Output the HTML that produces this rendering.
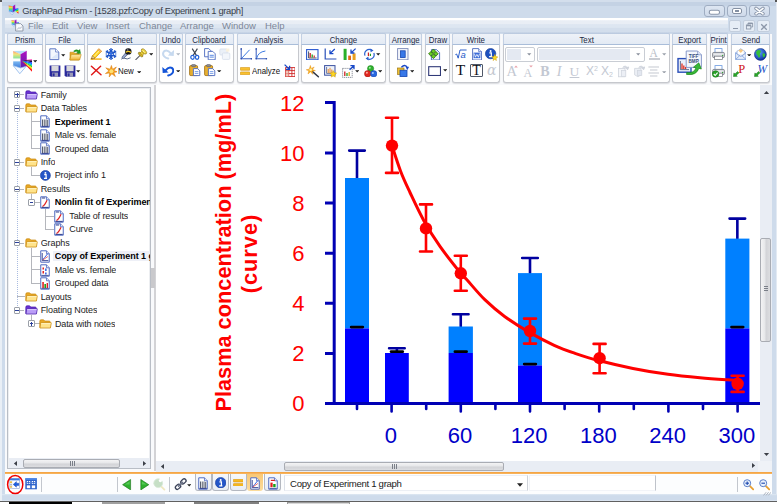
<!DOCTYPE html><html><head><meta charset="utf-8"><title>GraphPad Prism</title><style>
*{box-sizing:border-box}
html,body{margin:0;padding:0}
body{width:777px;height:504px;position:relative;overflow:hidden;background:#cedbeb;font:9px "Liberation Sans",sans-serif;color:#222}
.a{position:absolute}
.t{position:absolute;white-space:nowrap;line-height:10px}
.grp{position:absolute;top:33px;height:50px;border:1px solid #c6c8cd;border-top-color:#bccbe0;border-radius:2px 2px 3px 3px;background:#fff;box-shadow:0 1px 1px #dcdde0}
.grp .h{position:absolute;left:-1px;right:-1px;top:-1px;height:12px;background:linear-gradient(#eef2f8,#e3eaf4);border:1px solid #c3d0e3;border-top-color:#bccbe0;border-bottom-color:#a9bdd9;border-radius:2px 2px 0 0;text-align:center;line-height:11.6px;font-size:9.4px;color:#1e2a44;white-space:nowrap;overflow:visible}
.grp .h span{display:inline-block;transform:scaleX(0.84);transform-origin:50% 50%;margin:0 -10px}
.nar{display:inline-block;transform:scaleX(0.84);transform-origin:0 50%}
.mn{position:absolute;top:21px;color:#7d8798;font-size:9.5px;white-space:nowrap;line-height:10px}
.tri{position:absolute;width:0;height:0;border-left:2px solid transparent;border-right:2px solid transparent;border-top:2px solid #222}
</style></head><body>
<div class="a" style="left:0;top:0;width:777px;height:6.2px;background:linear-gradient(#d3deec 0,#d3deec 30%,#c4d2e4 38%,#c4d2e4 92%,#cedbeb 100%)"></div>
<div class="a" style="left:0;top:0;width:2px;height:504px;background:#e9eff6"></div>
<div class="a" style="left:0;top:0;width:2px;height:2px;background:#555"></div>
<div class="a" style="left:775px;top:0;width:2px;height:2px;background:#555"></div>
<div class="t" style="left:22.2px;top:6.2px;font-size:9.4px;color:#3a3f4a;letter-spacing:-0.32px">GraphPad Prism - [1528.pzf:Copy of Experiment 1 graph]</div>
<div class="a" style="left:776px;top:2px;width:1px;height:499px;background:#e3eaf3"></div>
<div class="a" style="left:703.5px;top:5px;width:21.0px;height:11.5px;border:1px solid #9fadc2;border-radius:3px;background:linear-gradient(#dde6f2,#cfdaea)"></div>
<div class="a" style="left:726.5px;top:5px;width:20.0px;height:11.5px;border:1px solid #9fadc2;border-radius:3px;background:linear-gradient(#dde6f2,#cfdaea)"></div>
<div class="a" style="left:749px;top:5px;width:20.5px;height:11.5px;border:1px solid #9fadc2;border-radius:3px;background:linear-gradient(#dde6f2,#cfdaea)"></div>
<svg class="a" style="left:708px;top:8px" width="13" height="8" viewBox="0 0 13 8"><rect x="1.3" y="2.2" width="10.2" height="4" rx="1.8" fill="#fff" stroke="#8a96aa" stroke-width="1.1"/></svg>
<div class="a" style="left:732px;top:7.5px;width:9.5px;height:6.5px;border:1.3px solid #8490a3;border-radius:2px;background:#fff"></div><div class="a" style="left:735px;top:10px;width:3.5px;height:1.6px;background:#8490a3"></div>
<svg class="a" style="left:753px;top:6px" width="13" height="10" viewBox="0 0 13 10"><path d="M3 2.4L10 7.8M10 2.4L3 7.8" stroke="#8a96aa" stroke-width="3.4" stroke-linecap="round"/><path d="M3 2.4L10 7.8M10 2.4L3 7.8" stroke="#fff" stroke-width="1.6" stroke-linecap="round"/></svg>
<div class="a" style="left:5px;top:18px;width:767.4px;height:477px;background:#f9fafc"></div>
<div class="a" style="left:5px;top:18px;width:767.4px;height:16px;background:#cedbeb"></div>
<div class="a" style="left:5px;top:18px;width:723px;height:15.2px;background:linear-gradient(#ffffff 0,#ffffff 12%,#e9eef5 18%,#e9eef5 38%,#dde6f1 44%,#dde6f1 62%,#d3deec 70%,#d3deec 92%,#bfcee2 100%)"></div>
<div class="mn" style="left:28px">File</div>
<div class="mn" style="left:52px">Edit</div>
<div class="mn" style="left:77px">View</div>
<div class="mn" style="left:106px">Insert</div>
<div class="mn" style="left:139px">Change</div>
<div class="mn" style="left:180px">Arrange</div>
<div class="mn" style="left:222px">Window</div>
<div class="mn" style="left:265px">Help</div>
<div class="a" style="left:728.5px;top:20px;width:12.8px;height:12.3px;border:1px solid #c3cedd;border-radius:2px;background:#e6edf6"></div>
<div class="a" style="left:743.3px;top:20px;width:12.2px;height:12.3px;border:1px solid #c3cedd;border-radius:2px;background:#e6edf6"></div>
<div class="a" style="left:757px;top:20px;width:12.7px;height:12.3px;border:1px solid #c3cedd;border-radius:2px;background:#e6edf6"></div>
<div class="a" style="left:732.5px;top:28px;width:5px;height:1.4px;background:#8c97a9"></div>
<svg class="a" style="left:745px;top:22px" width="9" height="9" viewBox="0 0 9 9" fill="none" stroke="#8c97a9" stroke-width="0.9"><path d="M3 2.8V1H7.6V5H6"/><rect x="1.4" y="3" width="4.4" height="4"/><path d="M1.4 3.6H5.8M3 1.5H7.6" stroke-width="1.2"/></svg>
<svg class="a" style="left:759.5px;top:22.5px" width="8" height="8" viewBox="0 0 8 8"><path d="M1.2 1.2L6.8 6.8M6.8 1.2L1.2 6.8" stroke="#8c97a9" stroke-width="1.3"/></svg>
<div class="grp" style="left:7px;width:36px"><div class="h"><span>Prism</span></div></div>
<div class="grp" style="left:45px;width:40px"><div class="h"><span>File</span></div></div>
<div class="grp" style="left:87px;width:70px"><div class="h"><span>Sheet</span></div></div>
<div class="grp" style="left:159px;width:24px"><div class="h"><span>Undo</span></div></div>
<div class="grp" style="left:185px;width:49px"><div class="h"><span>Clipboard</span></div></div>
<div class="grp" style="left:237px;width:62px"><div class="h"><span>Analysis</span></div></div>
<div class="grp" style="left:301px;width:85px"><div class="h"><span>Change</span></div></div>
<div class="grp" style="left:389px;width:33px"><div class="h"><span>Arrange</span></div></div>
<div class="grp" style="left:425px;width:25px"><div class="h"><span>Draw</span></div></div>
<div class="grp" style="left:452px;width:48px"><div class="h"><span>Write</span></div></div>
<div class="grp" style="left:503px;width:167px"><div class="h"><span>Text</span></div></div>
<div class="grp" style="left:672px;width:35px"><div class="h"><span>Export</span></div></div>
<div class="grp" style="left:710px;width:18px"><div class="h"><span>Print</span></div></div>
<div class="grp" style="left:731px;width:39px"><div class="h"><span>Send</span></div></div>
<svg class="a" width="0" height="0" style="left:0;top:0"><defs><linearGradient id="gRain" x1="0" y1="0" x2="0" y2="1"><stop offset="0" stop-color="#ff5040"/><stop offset="0.25" stop-color="#ffe040"/><stop offset="0.5" stop-color="#60e060"/><stop offset="0.75" stop-color="#40b0ff"/><stop offset="1" stop-color="#5070e0"/></linearGradient><linearGradient id="gPurp" x1="0" y1="0" x2="0" y2="1"><stop offset="0" stop-color="#b010c0"/><stop offset="1" stop-color="#6020b0"/></linearGradient><linearGradient id="gBeam" x1="0" y1="0" x2="0.45" y2="1"><stop offset="0" stop-color="#200020"/><stop offset="0.18" stop-color="#b000d0"/><stop offset="0.36" stop-color="#2040ff"/><stop offset="0.5" stop-color="#00c8e0"/><stop offset="0.64" stop-color="#30d030"/><stop offset="0.8" stop-color="#ffe020"/><stop offset="1" stop-color="#ff1010"/></linearGradient><radialGradient id="gGlobe" cx="0.4" cy="0.35" r="0.7"><stop offset="0" stop-color="#5aa0ff"/><stop offset="1" stop-color="#0a2a9a"/></radialGradient><linearGradient id="gFold" x1="0" y1="0" x2="0" y2="1"><stop offset="0" stop-color="#fff0b0"/><stop offset="1" stop-color="#f0b030"/></linearGradient></defs></svg>
<svg class="a" width="0" height="0" style="left:0;top:0"><defs><linearGradient id="gFace" x1="0" y1="0" x2="0" y2="1"><stop offset="0" stop-color="#f89878"/><stop offset="0.18" stop-color="#f6e27a"/><stop offset="0.38" stop-color="#98e498"/><stop offset="0.5" stop-color="#fdfefe"/><stop offset="0.58" stop-color="#fdfefe"/><stop offset="0.64" stop-color="#78b4f0"/><stop offset="1" stop-color="#3c7cdc"/></linearGradient></defs></svg>
<svg class="a" style="left:12px;top:49.5px" width="21" height="24.5" viewBox="0 0 21 24.5" ><path d="M1.2 1.1L14.75 0.7L8.5 4.2Z" fill="#b4dcf8"/><path d="M1.2 1.1L8.5 4.2V17.9L1.2 15.6Z" fill="url(#gFace)"/><path d="M8.5 4.2L14.75 0.7V16.2L8.5 17.9Z" fill="url(#gPurp)"/><path d="M1.2 15.6L8.5 17.9L14.2 16.3L7.8 23.7Z" fill="#f6faff" stroke="#7aaae8" stroke-width="0.7"/><path d="M9.8 10.20L20 9.3V10.75Z" fill="#ff38b0"/><path d="M9.8 10.32L20 10.6V12.35Z" fill="#180838"/><path d="M9.8 10.44L20 12.2V14.15Z" fill="#2848ff"/><path d="M9.8 10.56L20 14.0V15.950000000000001Z" fill="#00c0e8"/><path d="M9.8 10.68L20 15.8V17.75Z" fill="#30d030"/><path d="M9.8 10.80L20 17.6V19.65Z" fill="#ffe820"/><path d="M9.8 10.92L20 19.5V21.75Z" fill="#ff1010"/></svg>
<svg class="a" style="left:32.8px;top:60.4px" width="4.4" height="2.8" viewBox="0 0 4.4 2.8" ><path d="M0.1 0.2H4.3L2.2 2.6Z" fill="#1a1a1a"/></svg>
<svg class="a" style="left:49px;top:48px" width="11" height="12.5" viewBox="0 0 11 12.5" ><path d="M0.8 0.8H6.6L9.8 4V11.6H0.8Z" fill="#f2f6fd" stroke="#5f78c4" stroke-width="1"/><path d="M6.6 0.8V4H9.8" fill="#fff" stroke="#5f78c4" stroke-width="0.8"/><path d="M2 10.5L8.8 5V10.5Z" fill="#dbe6f8"/></svg>
<svg class="a" style="left:61.4px;top:53.9px" width="4.4" height="2.8" viewBox="0 0 4.4 2.8" ><path d="M0.1 0.2H4.3L2.2 2.6Z" fill="#1a1a1a"/></svg>
<svg class="a" style="left:69px;top:47.6px" width="13" height="13" viewBox="0 0 13 13" ><path d="M1 4.2H4.5L5.5 5.3H10V12H1Z" fill="#e9a825" stroke="#c08a10" stroke-width="0.6"/><path d="M0.8 12L2.2 6.6H12.2L10.6 12Z" fill="url(#gFold)" stroke="#c08a10" stroke-width="0.6"/><path d="M4.6 3.2Q7.2 0.6 9.8 2.6L10.8 1.4L11.6 5.6L7.6 5.2L8.8 3.9Q7 2.6 5.6 4Z" fill="#22a022" stroke="#0a700a" stroke-width="0.4"/></svg>
<svg class="a" style="left:48.6px;top:64.5px" width="12" height="12.4" viewBox="0 0 12 12.4" ><path d="M0.6 0.6H11.4V11.8H1.8L0.6 10.6Z" fill="#2a2a9c"/><rect x="2.4" y="0.6" width="7.2" height="5.6" fill="#d8d8dc"/><rect x="3" y="7.6" width="6" height="4.2" fill="#9a9ab8"/><rect x="3.6" y="8.4" width="2" height="2.8" fill="#2a2a9c"/></svg>
<svg class="a" style="left:63.6px;top:64.5px" width="12" height="12.4" viewBox="0 0 12 12.4" ><path d="M0.6 0.6H11.4V11.8H1.8L0.6 10.6Z" fill="#2a2a9c"/><rect x="2.4" y="0.6" width="7.2" height="5.6" fill="#d8d8dc"/><rect x="3" y="7.6" width="6" height="4.2" fill="#9a9ab8"/><rect x="3.6" y="8.4" width="2" height="2.8" fill="#2a2a9c"/></svg>
<svg class="a" style="left:76.3px;top:70.0px" width="4.4" height="2.8" viewBox="0 0 4.4 2.8" ><path d="M0.1 0.2H4.3L2.2 2.6Z" fill="#1a1a1a"/></svg>
<svg class="a" style="left:89.6px;top:48px" width="12.4" height="12.4" viewBox="0 0 12.4 12.4" ><path d="M0.6 11.1H11.6" stroke="#f6b31c" stroke-width="1.5"/><path d="M2.4 7.8L8.8 0.8L11.6 3.2L5 10.2L1.6 11Z" fill="#ffd722" stroke="#d8900c" stroke-width="0.7"/><path d="M4 8.6L9.8 2.2" stroke="#fff0a0" stroke-width="1"/><path d="M2.4 7.8L5 10.2L1.6 11Z" fill="#f0d8a8" stroke="#8a5a10" stroke-width="0.5"/><path d="M1.6 11L2.6 10.7L1.9 10Z" fill="#302010"/><path d="M8.8 0.8L11.6 3.2L10.7 4.2L7.9 1.8Z" fill="#f4b0a0" stroke="#d8900c" stroke-width="0.4"/></svg>
<svg class="a" style="left:105px;top:48.4px" width="12" height="12" viewBox="0 0 12 12" ><g stroke="#1c54c8" stroke-width="1.3" fill="none" stroke-linecap="round"><path d="M6 0.6V11.4M1.3 3.3L10.7 8.7M1.3 8.7L10.7 3.3"/><path d="M4.5 1.5L6 2.9L7.5 1.5M4.5 10.5L6 9.1L7.5 10.5M1.1 5.1L2.9 4.4L2.6 2.5M10.9 6.9L9.1 7.6L9.4 9.5M1.1 6.9L2.9 7.6L2.6 9.5M10.9 5.1L9.1 4.4L9.4 2.5" stroke-width="1.05"/><circle cx="6" cy="6" r="2.4" stroke-width="1.05"/></g><circle cx="6" cy="6" r="0.9" fill="#3a78f0"/></svg>
<svg class="a" style="left:120px;top:48px" width="12.4" height="12.4" viewBox="0 0 12.4 12.4" ><path d="M1.2 11.2Q3.4 9 5 10.4T10.6 9.8" stroke="#4a5a80" stroke-width="0.9" fill="none"/><path d="M1.8 9.4L5.8 4.6L7.8 6.4L3.4 10.6Z" fill="#93a3cc" stroke="#3a4868" stroke-width="0.6"/><circle cx="8.3" cy="3.4" r="3.2" fill="#16161c"/><path d="M5.8 4.2Q8.4 2.4 11 4.4" stroke="#f2c81e" stroke-width="1.3" fill="none"/><circle cx="7.6" cy="2" r="0.9" fill="#70707c"/></svg>
<svg class="a" style="left:135.4px;top:48px" width="12.6" height="12.4" viewBox="0 0 12.6 12.4" ><path d="M0.8 11.6L5.6 6.8" stroke="#5a5a64" stroke-width="1.1" stroke-linecap="round"/><ellipse cx="0" cy="0" rx="2.9" ry="1.3" transform="translate(5.6 6.6) rotate(45)" fill="#d8b828" stroke="#7a6410" stroke-width="0.6"/><path d="M4.9 5.1L7 3L9.4 5.4L7.2 7.4Z" fill="#e8cc38" stroke="#8a7010" stroke-width="0.5"/><ellipse cx="0" cy="0" rx="3.3" ry="1.7" transform="translate(9 3.4) rotate(45)" fill="#f0d848" stroke="#8a7010" stroke-width="0.6"/><path d="M7.6 2.6L9.6 4.6" stroke="#fff6b0" stroke-width="0.8"/></svg>
<svg class="a" style="left:149.1px;top:52.8px" width="4.4" height="2.8" viewBox="0 0 4.4 2.8" ><path d="M0.1 0.2H4.3L2.2 2.6Z" fill="#1a1a1a"/></svg>
<svg class="a" style="left:89.6px;top:65px" width="12.4" height="11" viewBox="0 0 12.4 11" ><path d="M1.4 1.2L11 9.8M10.6 1.2L1.6 9.8" stroke="#e01818" stroke-width="1.45" stroke-linecap="round"/></svg>
<svg class="a" style="left:104.6px;top:64.6px" width="12.8" height="12.4" viewBox="0 0 12.8 12.4" ><path d="M6.4 0.4L7.6 4.2L11.4 2L9 5.6L12.6 6.8L8.8 7.6L10.4 11.6L6.8 8.8L4.2 12L4.6 8L0.4 8.6L3.8 6L0.8 2.8L5 4.2Z" fill="#f5a020" stroke="#d87808" stroke-width="0.5"/><circle cx="6.4" cy="6.3" r="2" fill="#ffe070"/></svg>
<div class="t" style="left:118.3px;top:66px;font-size:9.4px;color:#111"><span class="nar">New</span></div>
<svg class="a" style="left:136.7px;top:70.6px" width="4.4" height="2.8" viewBox="0 0 4.4 2.8" ><path d="M0.1 0.2H4.3L2.2 2.6Z" fill="#1a1a1a"/></svg>
<svg class="a" style="left:161.5px;top:48.8px" width="12.4" height="10.8" viewBox="0 0 12.4 10.8" ><g transform="translate(12.4 0) scale(-1 1)"><path d="M3.4 4.6Q6.6 0.2 10 2Q12.6 4.4 10.2 7.4Q8.8 9 6.2 9.6" stroke="#c6d9ef" stroke-width="2" fill="none" stroke-linecap="round"/><path d="M0.3 0.9L0.7 7L6.6 6.4Z" fill="#c6d9ef"/></g></svg>
<svg class="a" style="left:176.1px;top:52.9px" width="4.4" height="2.8" viewBox="0 0 4.4 2.8" ><path d="M0.1 0.2H4.3L2.2 2.6Z" fill="#b0b8c4"/></svg>
<svg class="a" style="left:161.7px;top:65.8px" width="12.4" height="10.8" viewBox="0 0 12.4 10.8" ><g><path d="M3.4 4.6Q6.6 0.2 10 2Q12.6 4.4 10.2 7.4Q8.8 9 6.2 9.6" stroke="#1454d8" stroke-width="2" fill="none" stroke-linecap="round"/><path d="M0.3 0.9L0.7 7L6.6 6.4Z" fill="#1454d8"/></g></svg>
<svg class="a" style="left:176.1px;top:69.5px" width="4.4" height="2.8" viewBox="0 0 4.4 2.8" ><path d="M0.1 0.2H4.3L2.2 2.6Z" fill="#1a1a1a"/></svg>
<svg class="a" style="left:190.2px;top:48px" width="9.6" height="11.8" viewBox="0 0 9.6 11.8" ><path d="M2.2 0.6L6.4 7.4M7.4 0.6L3.2 7.4" stroke="#38404e" stroke-width="1.1"/><ellipse cx="2.5" cy="9.3" rx="1.7" ry="2" fill="none" stroke="#2060d8" stroke-width="1.2"/><ellipse cx="7.1" cy="9.3" rx="1.7" ry="2" fill="none" stroke="#2060d8" stroke-width="1.2"/></svg>
<svg class="a" style="left:204.2px;top:48px" width="12" height="12.4" viewBox="0 0 12 12.4" ><path d="M0.6 0.6H4.76L7.0 2.84V8.799999999999999H0.6Z" fill="#fff" stroke="#4a68c0" stroke-width="0.9"/><path d="M4.2 3.4H8.799999999999999L11.2 5.8V11.8H4.2Z" fill="#fff" stroke="#4a68c0" stroke-width="0.9"/><path d="M5.6 7.4H9.8M5.6 9.2H9.8" stroke="#7aa0e8" stroke-width="1.2"/></svg>
<svg class="a" style="left:219px;top:48px" width="11.6" height="12.4" viewBox="0 0 11.6 12.4" ><g opacity="0.35"><rect x="0.8" y="1" width="7.4" height="6" rx="1" fill="#c8d6ea" stroke="#8aa0c8" stroke-width="0.8"/><rect x="3.4" y="5" width="7.4" height="6.4" rx="1" fill="#dfe8f4" stroke="#8aa0c8" stroke-width="0.8"/><rect x="7" y="0.6" width="3.4" height="3" fill="#f0d8a0"/></g></svg>
<svg class="a" style="left:189.2px;top:64.4px" width="11.6" height="12.4" viewBox="0 0 11.6 12.4" ><rect x="0.6" y="1.6" width="8" height="10" rx="1.2" fill="#e8b030" stroke="#9a6a10" stroke-width="0.8"/><rect x="2.6" y="0.5" width="4" height="2.2" rx="0.8" fill="#8a8a92" stroke="#50505a" stroke-width="0.5"/><path d="M4.4 4.6H8.56L10.8 6.84V11.6H4.4Z" fill="#fff" stroke="#4a68c0" stroke-width="0.9"/><path d="M5.8 7.6H9.4M5.8 9.4H9.4" stroke="#7aa0e8" stroke-width="1"/></svg>
<svg class="a" style="left:204.4px;top:64.4px" width="11.6" height="12.4" viewBox="0 0 11.6 12.4" ><rect x="0.6" y="1.6" width="8" height="10" rx="1.2" fill="#e8b030" stroke="#9a6a10" stroke-width="0.8"/><rect x="2.6" y="0.5" width="4" height="2.2" rx="0.8" fill="#8a8a92" stroke="#50505a" stroke-width="0.5"/><path d="M4.4 4.6H8.56L10.8 6.84V11.6H4.4Z" fill="#fff" stroke="#4a68c0" stroke-width="0.9"/><path d="M5.8 7.6H9.4M5.8 9.4H9.4" stroke="#7aa0e8" stroke-width="1"/></svg>
<svg class="a" style="left:217.2px;top:69.6px" width="4.4" height="2.8" viewBox="0 0 4.4 2.8" ><path d="M0.1 0.2H4.3L2.2 2.6Z" fill="#1a1a1a"/></svg>
<svg class="a" style="left:239.8px;top:48px" width="12.4" height="12" viewBox="0 0 12.4 12" ><path d="M1.2 0.8V10.8H11.6" stroke="#3e62c0" stroke-width="1.05" fill="none"/><path d="M1.6 10.4L9.6 1.8" stroke="#3a78e0" stroke-width="1"/><circle cx="1.2" cy="0.9" r="0.8" fill="#2a4aa8"/><circle cx="11.4" cy="10.8" r="0.8" fill="#2a4aa8"/><circle cx="1.2" cy="10.8" r="0.8" fill="#2a4aa8"/></svg>
<svg class="a" style="left:255.4px;top:48px" width="12.4" height="12" viewBox="0 0 12.4 12" ><path d="M1.2 0.8V10.8H11.6" stroke="#3e62c0" stroke-width="1.05" fill="none"/><path d="M1.6 10.4Q3 4 10.4 3" stroke="#3a78e0" stroke-width="1" fill="none"/><circle cx="1.2" cy="0.9" r="0.8" fill="#2a4aa8"/><circle cx="11.4" cy="10.8" r="0.8" fill="#2a4aa8"/><circle cx="1.2" cy="10.8" r="0.8" fill="#2a4aa8"/></svg>
<svg class="a" style="left:239.8px;top:66.8px" width="10.4" height="8.4" viewBox="0 0 10.4 8.4" ><rect x="0.3" y="0.4" width="9.6" height="2.9" rx="0.6" fill="#f8c030" stroke="#d09010" stroke-width="0.6"/><rect x="0.3" y="4.9" width="9.6" height="2.9" rx="0.6" fill="#f8c030" stroke="#d09010" stroke-width="0.6"/></svg>
<div class="t" style="left:252px;top:66px;font-size:9.4px;color:#111"><span class="nar">Analyze</span></div>
<svg class="a" style="left:283.8px;top:64.4px" width="11.6" height="13" viewBox="0 0 11.6 13" ><rect x="1.6" y="3.6" width="9.4" height="9" fill="#fff" stroke="#d02828" stroke-width="0.9"/><path d="M1.6 6.6H11M1.6 9.6H11M4.7 3.6V12.6M7.9 3.6V12.6" stroke="#d02828" stroke-width="0.9"/><rect x="1.6" y="6.6" width="3.1" height="6" fill="#e8b0a0" opacity="0.7"/><path d="M0.6 0.6L5.4 5.2M5.6 1.8V5.4H2" stroke="#1848c8" stroke-width="1.3" fill="none"/></svg>
<svg class="a" style="left:306.4px;top:48.6px" width="12.6" height="11.6" viewBox="0 0 12.6 11.6" ><rect x="0.6" y="0.6" width="11.4" height="10.2" fill="#fff" stroke="#2a58d0" stroke-width="1.1"/><path d="M2.6 2.4V9H10.6" stroke="#202840" stroke-width="0.8" fill="none"/><path d="M4.2 4V8.6" stroke="#d02020" stroke-width="1.3"/><path d="M6.2 5.4V8.6" stroke="#20a020" stroke-width="1.3"/><path d="M8.2 6.6V8.6" stroke="#d02020" stroke-width="1.2"/></svg>
<svg class="a" style="left:324px;top:48px" width="13" height="12.4" viewBox="0 0 13 12.4" ><path d="M1.2 0.6V11H12.4" stroke="#2a50b8" stroke-width="1.2" fill="none"/><path d="M10.8 1L6.2 5.4M6 2.2V5.6H9.4" stroke="#1848c8" stroke-width="1.3" fill="none"/></svg>
<svg class="a" style="left:343px;top:47.8px" width="13.6" height="12.6" viewBox="0 0 13.6 12.6" ><rect x="0.6" y="0.8" width="3" height="11.4" fill="#28b028"/><rect x="5.2" y="7.6" width="2.8" height="4.6" fill="#e06818"/><rect x="9.6" y="5.4" width="3" height="6.8" fill="#e8a020"/><path d="M12.6 0.6L8.4 4.6M8 1.6V5H11.4" stroke="#1848c8" stroke-width="1.3" fill="none"/></svg>
<svg class="a" style="left:363px;top:48px" width="12.8" height="12.6" viewBox="0 0 12.8 12.6" ><path d="M2 7.6A4.6 4.6 0 0 1 8.6 2" stroke="#2a60d0" stroke-width="1.2" fill="none"/><path d="M10.8 5A4.6 4.6 0 0 1 4.4 10.8" stroke="#2a60d0" stroke-width="1.2" fill="none"/><path d="M7.4 0.4L10.6 2.4L7.6 4.2Z M5.6 12.4L2.6 10.6L5.4 8.6Z" fill="#2a60d0"/><path d="M5.4 4.6V8" stroke="#d02020" stroke-width="1.2"/><path d="M7.4 5.8V8" stroke="#20a020" stroke-width="1.2"/></svg>
<svg class="a" style="left:376.4px;top:53.2px" width="4.4" height="2.8" viewBox="0 0 4.4 2.8" ><path d="M0.1 0.2H4.3L2.2 2.6Z" fill="#1a1a1a"/></svg>
<svg class="a" style="left:306.4px;top:65px" width="13.2" height="12.6" viewBox="0 0 13.2 12.6" ><path d="M5.4 5.6L12.4 11.8" stroke="#303848" stroke-width="1.5" stroke-linecap="round"/><path d="M4.4 0.4L5.2 3.4L8.2 2L6.4 4.6L9.4 5.6L6.2 6.2L6.8 9.4L4.6 6.8L2 9L2.8 5.8L0.2 4.8L3.2 4.2Z" fill="#f8b020" stroke="#e08808" stroke-width="0.4"/><circle cx="4.7" cy="4.8" r="1.3" fill="#fff4b0"/></svg>
<svg class="a" style="left:324px;top:65px" width="13" height="12.8" viewBox="0 0 13 12.8" ><rect x="0.6" y="0.6" width="10.4" height="9.6" fill="#eef2fa" stroke="#3a50a0" stroke-width="1"/><path d="M2.6 2V8.4H9" stroke="#3a4a80" stroke-width="0.7" fill="none"/><path d="M4.2 4V8M6 2.8V8M7.8 4.6V8" stroke="#e89040" stroke-width="1.1"/><path d="M9.2 5.6L10.2 7.8L12.6 8.1L10.8 9.7L11.3 12.1L9.2 10.9L7.1 12.1L7.6 9.7L5.8 8.1L8.2 7.8Z" fill="#ffd820" stroke="#c89808" stroke-width="0.5"/></svg>
<svg class="a" style="left:342px;top:64.8px" width="12.6" height="13" viewBox="0 0 12.6 13" ><rect x="0.6" y="3.4" width="9.6" height="9" fill="#fff" stroke="#505868" stroke-width="0.8" stroke-dasharray="1 1"/><path d="M2.8 6.6V11" stroke="#d02020" stroke-width="1.3"/><path d="M5 8V11" stroke="#20a020" stroke-width="1.3"/><path d="M7.2 7V11" stroke="#e8a020" stroke-width="1.3"/><path d="M7.6 4.8L11.6 1M8.4 0.7H12V4.2" stroke="#1848c8" stroke-width="1.3" fill="none"/></svg>
<svg class="a" style="left:354.6px;top:69.8px" width="4.4" height="2.8" viewBox="0 0 4.4 2.8" ><path d="M0.1 0.2H4.3L2.2 2.6Z" fill="#1a1a1a"/></svg>
<svg class="a" style="left:364px;top:64.8px" width="13.4" height="12.6" viewBox="0 0 13.4 12.6" ><circle cx="6.6" cy="3.6" r="3.1" fill="#30b030" stroke="#108010" stroke-width="0.5"/><circle cx="3.7" cy="8.7" r="3.2" fill="#e02820" stroke="#a01008" stroke-width="0.5"/><circle cx="9.7" cy="8.8" r="3.2" fill="#2868e0" stroke="#1040a8" stroke-width="0.5"/><circle cx="5.8" cy="2.8" r="1" fill="#a0f0a0"/><circle cx="2.9" cy="7.8" r="1" fill="#ffa8a0"/><circle cx="8.9" cy="7.9" r="1" fill="#a8c8ff"/></svg>
<svg class="a" style="left:378.1px;top:69.8px" width="4.4" height="2.8" viewBox="0 0 4.4 2.8" ><path d="M0.1 0.2H4.3L2.2 2.6Z" fill="#1a1a1a"/></svg>
<svg class="a" style="left:397px;top:47.8px" width="11.6" height="12.4" viewBox="0 0 11.6 12.4" ><rect x="0.6" y="0.6" width="10.4" height="11.2" fill="#f4f6fb" stroke="#7a88b8" stroke-width="0.9"/><rect x="3.4" y="2.8" width="4.8" height="6.8" fill="#3878e8" stroke="#1848b0" stroke-width="0.8"/></svg>
<svg class="a" style="left:396.6px;top:64.4px" width="12.8" height="13" viewBox="0 0 12.8 13" ><rect x="0.6" y="4" width="6.4" height="6.4" fill="#f0c030" stroke="#a07810" stroke-width="0.7"/><rect x="3" y="6.2" width="7" height="6.4" fill="#3878e8" stroke="#1848b0" stroke-width="0.8"/><path d="M4.4 3.2Q7.8 -0.4 10.6 3.6" stroke="#1848c8" stroke-width="1.3" fill="none"/><path d="M12.2 2.6L10.4 6L8.6 3.2Z" fill="#1848c8"/></svg>
<svg class="a" style="left:410.0px;top:69.8px" width="4.4" height="2.8" viewBox="0 0 4.4 2.8" ><path d="M0.1 0.2H4.3L2.2 2.6Z" fill="#1a1a1a"/></svg>
<svg class="a" style="left:428.2px;top:47.6px" width="12.6" height="12.6" viewBox="0 0 12.6 12.6" ><path d="M3.4 1.6H8.6L11.6 4.6V12H3.4Z" fill="#eef2fb" stroke="#4a68c0" stroke-width="0.9"/><g fill="#68d020" stroke="#205808" stroke-width="0.7"><path d="M5.4 1L7.6 3.2L5.4 5.4L3.2 3.2Z"/><path d="M2.8 3.6L5 5.8L2.8 8L0.6 5.8Z"/><path d="M8 3.6L10.2 5.8L8 8L5.8 5.8Z"/><path d="M5.4 6.2L7.6 8.4L5.4 10.6L3.2 8.4Z"/></g></svg>
<svg class="a" style="left:427.8px;top:65.6px" width="13.2" height="10.2" viewBox="0 0 13.2 10.2" ><rect x="0.7" y="0.7" width="11.8" height="8.8" fill="#fff" stroke="#303a78" stroke-width="1.1"/></svg>
<svg class="a" style="left:442.6px;top:69.4px" width="4.4" height="2.8" viewBox="0 0 4.4 2.8" ><path d="M0.1 0.2H4.3L2.2 2.6Z" fill="#1a1a1a"/></svg>
<svg class="a" style="left:455.4px;top:48.6px" width="12.4" height="11" viewBox="0 0 12.4 11" ><path d="M0.4 5.6L1.6 5L3.2 9.2L5 1H11.6" stroke="#2458c8" stroke-width="0.95" fill="none"/><text x="5.6" y="9.4" font-family="Liberation Sans, sans-serif" font-style="italic" font-size="9.5" fill="#2458c8">a</text></svg>
<svg class="a" style="left:471.8px;top:47.8px" width="10.4" height="12.6" viewBox="0 0 10.4 12.6" ><path d="M0.6 0.6H6.6L9.6 3.6V12H0.6Z" fill="#fff" stroke="#4a68c0" stroke-width="0.9"/><path d="M6.6 0.6V3.6H9.6" fill="#dfe6f6" stroke="#4a68c0" stroke-width="0.7"/><rect x="1.6" y="4.6" width="6.8" height="5.6" fill="#3c6cd8"/><path d="M2.4 5.6L3.4 9.2L4.9 6.4L6.4 9.2L7.6 5.6" stroke="#fff" stroke-width="0.8" fill="none"/></svg>
<svg class="a" style="left:485.2px;top:47.6px" width="13" height="13" viewBox="0 0 13 13" ><circle cx="5.6" cy="5.6" r="5.2" fill="#1c50c0" stroke="#103890" stroke-width="0.6"/><circle cx="5.6" cy="2.9" r="1" fill="#fff"/><path d="M4.3 4.8H6.3V8.4M4.1 8.6H7.3" stroke="#fff" stroke-width="1.25" fill="none"/><path d="M9.8 6.4L10.7 8.5L12.8 9L11 10.3L11.4 12.6L9.8 11.3L8 12.5L8.6 10.3L6.8 8.9L9 8.5Z" fill="#ffe020" stroke="#c89808" stroke-width="0.5"/></svg>
<div class="t" style="left:455.8px;top:62.4px;font:15.5px/16px 'Liberation Serif',serif;color:#101018">T</div>
<div class="a" style="left:470px;top:64.2px;width:13.2px;height:12.8px;border:1px solid #505868;border-radius:1px;background:#fff"></div>
<div class="t" style="left:472.2px;top:63px;font:14px/16px 'Liberation Serif',serif;color:#101018">T</div>
<div class="t" style="left:487px;top:62px;font:italic 14px/16px 'DejaVu Serif','Liberation Serif',serif;color:#c4c8d0">&#945;</div>
<div class="a" style="left:505px;top:47px;width:30px;height:15px;border:1px solid #c9cdd4;border-radius:2px;background:#fff"></div>
<div class="a" style="left:507px;top:49px;width:13.5px;height:11px;background:#e4e9f2"></div>
<svg class="a" style="left:527.2px;top:53.4px" width="4.4" height="2.8" viewBox="0 0 4.4 2.8" ><path d="M0.1 0.2H4.3L2.2 2.6Z" fill="#8a909c"/></svg>
<div class="a" style="left:537px;top:47px;width:107.5px;height:15px;border:1px solid #c9cdd4;border-radius:2px;background:#fff"></div>
<div class="a" style="left:539.4px;top:49px;width:90.6px;height:11px;background:#e4e9f2"></div>
<svg class="a" style="left:636.4px;top:53.4px" width="4.4" height="2.8" viewBox="0 0 4.4 2.8" ><path d="M0.1 0.2H4.3L2.2 2.6Z" fill="#8a909c"/></svg>
<div class="t" style="left:649.6px;top:47.2px;font:11.5px/12px 'Liberation Serif',serif;color:#b9bec8">A</div>
<div class="a" style="left:648.6px;top:57.6px;width:11px;height:2.4px;background:#c9ccd2"></div>
<svg class="a" style="left:662.2px;top:53.4px" width="4.4" height="2.8" viewBox="0 0 4.4 2.8" ><path d="M0.1 0.2H4.3L2.2 2.6Z" fill="#9aa0aa"/></svg>
<div class="t" style="left:506.6px;top:64.4px;font:14.5px/15px 'Liberation Serif',serif;color:#c3c8d2">A</div>
<svg class="a" style="left:514.4px;top:65px" width="4" height="3" viewBox="0 0 4 3" ><path d="M0.2 2.6L2 0.4L3.8 2.6Z" fill="#e8a0a8"/></svg>
<div class="t" style="left:523.4px;top:66.6px;font:12px/13px 'Liberation Serif',serif;color:#c3c8d2">A</div>
<svg class="a" style="left:529.4px;top:65px" width="4" height="3" viewBox="0 0 4 3" ><path d="M0.2 0.4L2 2.6L3.8 0.4Z" fill="#e8a0a8"/></svg>
<div class="t" style="left:540.2px;top:64.2px;font:bold 14px/15px 'Liberation Serif',serif;color:#c3c8d2">B</div>
<div class="t" style="left:556.8px;top:64.2px;font:italic 14px/15px 'Liberation Serif',serif;color:#c3c8d2">I</div>
<div class="t" style="left:569.6px;top:64.2px;font:13.5px/15px 'Liberation Serif',serif;color:#c3c8d2;text-decoration:underline">U</div>
<div class="t" style="left:586px;top:65.4px;font:12px/13px 'Liberation Sans',sans-serif;color:#c3c8d2">X<span style="font-size:7px;position:relative;top:-4.5px">2</span></div>
<div class="t" style="left:601px;top:65.4px;font:12px/13px 'Liberation Sans',sans-serif;color:#c3c8d2">X<span style="font-size:7px;position:relative;top:2px">2</span></div>
<svg class="a" style="left:618.2px;top:65.4px" width="11.4" height="12.4" viewBox="0 0 11.4 12.4" ><g opacity="0.55"><rect x="0.6" y="3.4" width="6.4" height="8.4" fill="#eef1f6" stroke="#aab2c2" stroke-width="0.8"/><rect x="3.4" y="5.4" width="4.4" height="6.2" fill="#dde3ee" stroke="#aab2c2" stroke-width="0.7"/><path d="M4.6 2.6Q7.4 -0.4 9.6 3M10.8 2L9.6 4.8L7.6 2.8Z" stroke="#aab2c2" stroke-width="1" fill="#aab2c2"/></g></svg>
<svg class="a" style="left:634px;top:65.4px" width="11.4" height="12.4" viewBox="0 0 11.4 12.4" ><g opacity="0.55"><path d="M0.6 3.4H7V9.8L4 11.8L0.6 9.8Z" fill="#dde3ee" stroke="#aab2c2" stroke-width="0.8"/><rect x="3.4" y="5.4" width="4.4" height="5" fill="#cdd5e4" stroke="#aab2c2" stroke-width="0.7"/><path d="M4.6 2.6Q7.4 -0.4 9.6 3M10.8 2L9.6 4.8L7.6 2.8Z" stroke="#aab2c2" stroke-width="1" fill="#aab2c2"/></g></svg>
<svg class="a" style="left:648.4px;top:66.4px" width="11.4" height="11" viewBox="0 0 11.4 11" ><path d="M0.4 1H11M2 4H9.4M0.4 7H11M2 10H9.4" stroke="#c4c8d0" stroke-width="1"/></svg>
<svg class="a" style="left:662.2px;top:70.6px" width="4.4" height="2.8" viewBox="0 0 4.4 2.8" ><path d="M0.1 0.2H4.3L2.2 2.6Z" fill="#9aa0aa"/></svg>
<svg class="a" style="left:676.6px;top:49.6px" width="26" height="25" viewBox="0 0 26 25" ><rect x="1" y="8.6" width="13" height="13.6" fill="#eaf0fb" stroke="#2a4eb8" stroke-width="1.4"/><path d="M3.4 11V19.6H12" stroke="#303a60" stroke-width="0.7" fill="none"/><path d="M5 13.4V19M6.8 15.6V19M8.6 17V19" stroke="#e03020" stroke-width="1.3"/><path d="M9.2 1H20.6L24.4 4.8V17.4H9.2Z" fill="#f4f7fc" stroke="#7c8fc4" stroke-width="0.9"/><path d="M20.6 1V4.8H24.4" fill="#dfe6f6" stroke="#7c8fc4" stroke-width="0.7"/><text x="16.6" y="8.4" font-family="Liberation Sans, sans-serif" font-weight="bold" font-size="4.6" fill="#3a4a78" text-anchor="middle">TIFF</text><text x="16.6" y="13" font-family="Liberation Sans, sans-serif" font-weight="bold" font-size="4.6" fill="#3a4a78" text-anchor="middle">BMP</text><path d="M9.6 22.6Q17.2 23.4 19 17.8L16.4 17.2L21.8 12.8L24.4 19L21.8 18.4Q19.6 25.6 9.6 24.6Z" fill="#38b838" stroke="#0e7a0e" stroke-width="0.6"/></svg>
<svg class="a" style="left:712px;top:48px" width="13" height="13" viewBox="0 0 13 13" ><rect x="3" y="0.6" width="7" height="4.4" fill="#fff" stroke="#6a9ae0" stroke-width="0.8"/><rect x="0.6" y="4.4" width="11.8" height="5.2" rx="1.2" fill="#d4d7dc" stroke="#70747c" stroke-width="0.8"/><rect x="2.6" y="8.2" width="7.8" height="3.2" fill="#fff" stroke="#70747c" stroke-width="0.7"/><path d="M1.6 6.2H11.4" stroke="#f4f5f7" stroke-width="0.9"/><circle cx="10.6" cy="7.4" r="0.6" fill="#30a030"/></svg>
<svg class="a" style="left:712px;top:64.6px" width="13" height="13" viewBox="0 0 13 13" ><rect x="3" y="0.6" width="7" height="4.4" fill="#fff" stroke="#6a9ae0" stroke-width="0.8"/><rect x="0.6" y="4.4" width="11.8" height="5.2" rx="1.2" fill="#d4d7dc" stroke="#70747c" stroke-width="0.8"/><rect x="2.6" y="8.2" width="7.8" height="3.2" fill="#fff" stroke="#70747c" stroke-width="0.7"/><path d="M1.6 6.2H11.4" stroke="#f4f5f7" stroke-width="0.9"/><circle cx="10.6" cy="7.4" r="0.6" fill="#30a030"/><circle cx="3.6" cy="9" r="3.3" fill="#28a028" stroke="#0e700e" stroke-width="0.5"/><path d="M1.8 9L3.2 10.5L5.6 7.6" stroke="#fff" stroke-width="1.1" fill="none"/></svg>
<svg class="a" style="left:734.6px;top:48.2px" width="11.6" height="12" viewBox="0 0 11.6 12" ><path d="M0.6 4.8L5.8 0.8L11 4.8V11.4H0.6Z" fill="#e6eefb" stroke="#7a9ad8" stroke-width="0.8"/><path d="M2.4 2.4H9.2V7H2.4Z" fill="#fff" stroke="#b0bcd8" stroke-width="0.5"/><path d="M3.4 2.6L5.8 1L8.2 2.6L5.8 5Z" fill="#f6c880"/><path d="M0.6 4.8L5.8 8.6L11 4.8M0.6 11.4L4.6 7.8M11 11.4L7 7.8" stroke="#7a9ad8" stroke-width="0.8" fill="none"/></svg>
<svg class="a" style="left:746.8px;top:53.6px" width="4.4" height="2.8" viewBox="0 0 4.4 2.8" ><path d="M0.1 0.2H4.3L2.2 2.6Z" fill="#1a1a1a"/></svg>
<svg class="a" style="left:754.2px;top:47.8px" width="12.8" height="12.8" viewBox="0 0 12.8 12.8" ><circle cx="6.4" cy="6.4" r="6" fill="url(#gGlobe)" stroke="#0a2478" stroke-width="0.5"/><path d="M3 2.4Q5 1.4 6.6 2.4Q7.4 4 6 5.2Q5.4 6.6 6.4 8Q5.6 10 4.4 9.4Q4.2 7.2 2.6 6.4Q1.6 4 3 2.4ZM8.6 5.4Q10.4 4.8 11.4 6.4Q11 8.8 9.4 9.6Q8.2 7.6 8.6 5.4Z" fill="#38c038"/></svg>
<div class="t" style="left:738.2px;top:63px;font:12.5px/13px 'Liberation Serif',serif;color:#d01818">P</div>
<svg class="a" style="left:733.2px;top:70.6px" width="6.4" height="6" viewBox="0 0 6.4 6" ><path d="M0.5 5.5L0.9 1.9L2 2.9L4.6 0.5L5.9 1.9L3.3 4.2L4.3 5.3Z" fill="#2aa82a" stroke="#0e700e" stroke-width="0.5"/></svg>
<div class="t" style="left:757.6px;top:63px;font:italic 11.5px/13px 'Liberation Serif',serif;color:#2050c8">W</div>
<svg class="a" style="left:754.4px;top:70.6px" width="6.4" height="6" viewBox="0 0 6.4 6" ><path d="M0.5 5.5L0.9 1.9L2 2.9L4.6 0.5L5.9 1.9L3.3 4.2L4.3 5.3Z" fill="#2aa82a" stroke="#0e700e" stroke-width="0.5"/></svg>
<div class="a" style="left:7.3px;top:87px;width:143.7px;height:382.3px;background:#fff;border:1.2px solid #b9bec6;box-shadow:inset 0 0 0 1px #eceef1"></div>
<div class="a" style="left:154.3px;top:85px;width:1.5px;height:386px;background:#d3d3d6"></div>
<div class="a" style="left:150.8px;top:268.4px;width:4.1px;height:19.3px;background:#c9c9cc"></div>
<div class="a" style="left:156px;top:85px;width:604px;height:376px;background:#fff"></div>
<div class="a" style="left:759.7px;top:85px;width:12.6px;height:375.5px;background:#e9edf4"></div>
<div class="a" style="left:757.5px;top:460.5px;width:14.8px;height:11px;background:#eff2f7"></div>
<div class="a" style="left:760.4px;top:237.5px;width:10.4px;height:104px;border:1px solid #a9acb3;border-radius:2px;background:linear-gradient(90deg,#f3f3f4,#e6e7e9 45%,#d2d3d7 55%,#dcdde0)"></div>
<div class="a" style="left:763.5px;top:286px;width:4.5px;height:1px;background:#7a7f88;box-shadow:0 2px 0 #7a7f88,0 4px 0 #7a7f88"></div>
<svg class="a" style="left:762.5px;top:89.5px" width="7" height="5" viewBox="0 0 7 5"><path d="M0.9 4L3.5 0.9L6.1 4Z" fill="#3c4048"/></svg>
<svg class="a" style="left:762.5px;top:451.5px" width="7" height="5" viewBox="0 0 7 5"><path d="M0.9 1L3.5 4.1L6.1 1Z" fill="#3c4048"/></svg>
<div class="a" style="left:156px;top:461px;width:601.5px;height:10.5px;background:#e9edf4"></div>
<div class="a" style="left:283.7px;top:461.6px;width:220.5px;height:9.4px;border:1px solid #a9acb3;border-radius:2px;background:linear-gradient(#f3f3f4,#e6e7e9 45%,#d2d3d7 55%,#dcdde0)"></div>
<div class="a" style="left:392px;top:464px;width:1px;height:4.5px;background:#7a7f88;box-shadow:2px 0 0 #7a7f88,4px 0 0 #7a7f88"></div>
<svg class="a" style="left:159.5px;top:462.8px" width="5" height="7" viewBox="0 0 5 7"><path d="M4 0.9L0.9 3.5L4 6.1Z" fill="#3c4048"/></svg>
<svg class="a" style="left:750.5px;top:462.3px" width="5" height="7" viewBox="0 0 5 7"><path d="M1 0.9L4.1 3.5L1 6.1Z" fill="#3c4048"/></svg>
<div class="a" style="left:8.6px;top:458.3px;width:141.2px;height:10px;background:#e9edf4"></div>
<div class="a" style="left:22.6px;top:458.6px;width:97.8px;height:9.4px;border:1px solid #a9acb3;border-radius:2px;background:linear-gradient(#f3f3f4,#e6e7e9 45%,#d2d3d7 55%,#dcdde0)"></div>
<div class="a" style="left:69.5px;top:461px;width:1px;height:4.5px;background:#7a7f88;box-shadow:2px 0 0 #7a7f88,4px 0 0 #7a7f88"></div>
<svg class="a" style="left:12.5px;top:459.8px" width="5" height="7" viewBox="0 0 5 7"><path d="M4 0.9L0.9 3.5L4 6.1Z" fill="#3c4048"/></svg>
<svg class="a" style="left:141.5px;top:459.8px" width="5" height="7" viewBox="0 0 5 7"><path d="M1 0.9L4.1 3.5L1 6.1Z" fill="#3c4048"/></svg>
<div class="a" style="left:16.6px;top:99px;width:0;height:207.3px;border-left:1px dotted #a9bbe0"></div>
<div class="a" style="left:31.3px;top:113.3px;width:1px;height:35.4px;background:#b4b6bc"></div>
<div class="a" style="left:31.3px;top:121.2px;width:8.7px;height:1px;background:#b4b6bc"></div>
<div class="a" style="left:31.3px;top:134.7px;width:8.7px;height:1px;background:#b4b6bc"></div>
<div class="a" style="left:31.3px;top:148.2px;width:8.7px;height:1px;background:#b4b6bc"></div>
<div class="a" style="left:31.3px;top:167.2px;width:1px;height:8.5px;background:#b4b6bc"></div>
<div class="a" style="left:31.3px;top:175.1px;width:8.7px;height:1px;background:#b4b6bc"></div>
<div class="a" style="left:31.3px;top:194.1px;width:1px;height:5.1px;background:#b4b6bc"></div>
<div class="a" style="left:35px;top:202.1px;width:5px;height:1px;background:#b4b6bc"></div>
<div class="a" style="left:45px;top:208.6px;width:1px;height:20.9px;background:#b4b6bc"></div>
<div class="a" style="left:45px;top:215.5px;width:9px;height:1px;background:#b4b6bc"></div>
<div class="a" style="left:45px;top:229.0px;width:9px;height:1px;background:#b4b6bc"></div>
<div class="a" style="left:31.3px;top:248.0px;width:1px;height:35.4px;background:#b4b6bc"></div>
<div class="a" style="left:31.3px;top:255.9px;width:8.7px;height:1px;background:#b4b6bc"></div>
<div class="a" style="left:31.3px;top:269.4px;width:8.7px;height:1px;background:#b4b6bc"></div>
<div class="a" style="left:31.3px;top:282.9px;width:8.7px;height:1px;background:#b4b6bc"></div>
<div class="a" style="left:17px;top:296.4px;width:8px;height:1px;background:#b4b6bc"></div>
<div class="a" style="left:31.3px;top:315.3px;width:1px;height:5.1px;background:#b4b6bc"></div>
<div class="a" style="left:35px;top:323.3px;width:5px;height:1px;background:#b4b6bc"></div>
<div class="a" style="left:20.4px;top:94.3px;width:4px;height:1px;background:#b4b6bc"></div>
<div class="a" style="left:13.6px;top:91.39999999999999px;width:6.8px;height:6.8px;border:1px solid #9ba0a8;background:#fff;border-radius:1px"></div><div class="a" style="left:15.1px;top:94.3px;width:3.8px;height:1px;background:#2a3f9a"></div><div class="a" style="left:16.5px;top:92.89999999999999px;width:1px;height:3.8px;background:#2a3f9a"></div>
<svg class="a" style="left:24.6px;top:89.89999999999999px" width="13" height="10" viewBox="0 0 13 10"><path d="M0.8 2.2Q0.8 0.8 2 0.8H4.6L5.8 2H10.2Q11.2 2 11.2 3V8.6H0.8Z" fill="#6a2fd6" stroke="#4a1fa8" stroke-width="0.7"/><path d="M1 9L1.6 4.2Q1.7 3.5 2.6 3.5H11.6Q12.5 3.5 12.3 4.3L11.4 9Z" fill="#b99cf7" stroke="#4a1fa8" stroke-width="0.7"/><path d="M2.4 4.6H11.4" stroke="#dccfff" stroke-width="0.9"/></svg>
<div class="t" style="left:40.7px;top:89.6px;max-width:109.5px;overflow:hidden;letter-spacing:-0.1px;color:#1c1c1c;">Family</div>
<div class="a" style="left:20.4px;top:107.8px;width:4px;height:1px;background:#b4b6bc"></div>
<div class="a" style="left:13.6px;top:104.86999999999999px;width:6.8px;height:6.8px;border:1px solid #9ba0a8;background:#fff;border-radius:1px"></div><div class="a" style="left:15.1px;top:107.77px;width:3.8px;height:1px;background:#2a3f9a"></div>
<svg class="a" style="left:24.6px;top:103.36999999999999px" width="13" height="10" viewBox="0 0 13 10"><path d="M0.8 2.2Q0.8 0.8 2 0.8H4.6L5.8 2H10.2Q11.2 2 11.2 3V8.6H0.8Z" fill="#e9a825" stroke="#c98a12" stroke-width="0.7"/><path d="M1 9L1.6 4.2Q1.7 3.5 2.6 3.5H11.6Q12.5 3.5 12.3 4.3L11.4 9Z" fill="#ffe38a" stroke="#c98a12" stroke-width="0.7"/><path d="M2.4 4.6H11.4" stroke="#fff3c4" stroke-width="0.9"/></svg>
<div class="t" style="left:40.7px;top:103.1px;max-width:109.5px;overflow:hidden;letter-spacing:-0.1px;color:#1c1c1c;">Data Tables</div>
<svg class="a" style="left:39.6px;top:115.33999999999999px" width="10.2" height="13" viewBox="0 0 11 13" preserveAspectRatio="none"><path d="M0.8 0.8H7L10 3.8V12.2H0.8Z" fill="#fff" stroke="#4a66bf" stroke-width="1"/><path d="M7 0.8V3.8H10" fill="#dfe6f6" stroke="#4a66bf" stroke-width="0.8"/><path d="M2.7 4.5V11M4.6 4.5V11M6.5 4.5V11M8.3 5V11" stroke="#5a6070" stroke-width="1.1"/><path d="M1.6 11.4H9.4" stroke="#26378a" stroke-width="1"/></svg>
<div class="t" style="left:54.7px;top:116.5px;max-width:95.5px;overflow:hidden;letter-spacing:-0.1px;color:#1c1c1c;font-weight:bold;color:#000;letter-spacing:-0.06px;">Experiment 1</div>
<svg class="a" style="left:39.6px;top:128.81px" width="10.2" height="13" viewBox="0 0 11 13" preserveAspectRatio="none"><path d="M0.8 0.8H7L10 3.8V12.2H0.8Z" fill="#fff" stroke="#4a66bf" stroke-width="1"/><path d="M7 0.8V3.8H10" fill="#dfe6f6" stroke="#4a66bf" stroke-width="0.8"/><path d="M2.7 4.5V11M4.6 4.5V11M6.5 4.5V11M8.3 5V11" stroke="#5a6070" stroke-width="1.1"/><path d="M1.6 11.4H9.4" stroke="#26378a" stroke-width="1"/></svg>
<div class="t" style="left:54.7px;top:130.0px;max-width:95.5px;overflow:hidden;letter-spacing:-0.1px;color:#1c1c1c;">Male vs. female</div>
<svg class="a" style="left:39.6px;top:142.28px" width="10.2" height="13" viewBox="0 0 11 13" preserveAspectRatio="none"><path d="M0.8 0.8H7L10 3.8V12.2H0.8Z" fill="#fff" stroke="#4a66bf" stroke-width="1"/><path d="M7 0.8V3.8H10" fill="#dfe6f6" stroke="#4a66bf" stroke-width="0.8"/><path d="M2.7 4.5V11M4.6 4.5V11M6.5 4.5V11M8.3 5V11" stroke="#5a6070" stroke-width="1.1"/><path d="M1.6 11.4H9.4" stroke="#26378a" stroke-width="1"/></svg>
<div class="t" style="left:54.7px;top:143.5px;max-width:95.5px;overflow:hidden;letter-spacing:-0.1px;color:#1c1c1c;">Grouped data</div>
<div class="a" style="left:20.4px;top:161.7px;width:4px;height:1px;background:#b4b6bc"></div>
<div class="a" style="left:13.6px;top:158.75px;width:6.8px;height:6.8px;border:1px solid #9ba0a8;background:#fff;border-radius:1px"></div><div class="a" style="left:15.1px;top:161.65px;width:3.8px;height:1px;background:#2a3f9a"></div>
<svg class="a" style="left:24.6px;top:157.25px" width="13" height="10" viewBox="0 0 13 10"><path d="M0.8 2.2Q0.8 0.8 2 0.8H4.6L5.8 2H10.2Q11.2 2 11.2 3V8.6H0.8Z" fill="#e9a825" stroke="#c98a12" stroke-width="0.7"/><path d="M1 9L1.6 4.2Q1.7 3.5 2.6 3.5H11.6Q12.5 3.5 12.3 4.3L11.4 9Z" fill="#ffe38a" stroke="#c98a12" stroke-width="0.7"/><path d="M2.4 4.6H11.4" stroke="#fff3c4" stroke-width="0.9"/></svg>
<div class="t" style="left:40.7px;top:157.0px;max-width:109.5px;overflow:hidden;letter-spacing:-0.1px;color:#1c1c1c;">Info</div>
<svg class="a" style="left:39.6px;top:170.2px" width="11" height="11" viewBox="0 0 11 11"><circle cx="5.4" cy="5.4" r="5" fill="#2456c8" stroke="#163a9a" stroke-width="0.6"/><circle cx="5.4" cy="2.9" r="0.95" fill="#fff"/><path d="M4.2 4.6H6.1V8.2M4 8.4H7" stroke="#fff" stroke-width="1.2" fill="none"/></svg>
<div class="t" style="left:54.7px;top:170.4px;max-width:95.5px;overflow:hidden;letter-spacing:-0.1px;color:#1c1c1c;">Project info 1</div>
<div class="a" style="left:20.4px;top:188.6px;width:4px;height:1px;background:#b4b6bc"></div>
<div class="a" style="left:13.6px;top:185.69px;width:6.8px;height:6.8px;border:1px solid #9ba0a8;background:#fff;border-radius:1px"></div><div class="a" style="left:15.1px;top:188.59px;width:3.8px;height:1px;background:#2a3f9a"></div>
<svg class="a" style="left:24.6px;top:184.19px" width="13" height="10" viewBox="0 0 13 10"><path d="M0.8 2.2Q0.8 0.8 2 0.8H4.6L5.8 2H10.2Q11.2 2 11.2 3V8.6H0.8Z" fill="#e9a825" stroke="#c98a12" stroke-width="0.7"/><path d="M1 9L1.6 4.2Q1.7 3.5 2.6 3.5H11.6Q12.5 3.5 12.3 4.3L11.4 9Z" fill="#ffe38a" stroke="#c98a12" stroke-width="0.7"/><path d="M2.4 4.6H11.4" stroke="#fff3c4" stroke-width="0.9"/></svg>
<div class="t" style="left:40.7px;top:183.9px;max-width:109.5px;overflow:hidden;letter-spacing:-0.1px;color:#1c1c1c;">Results</div>
<div class="a" style="left:28.1px;top:199.16px;width:6.8px;height:6.8px;border:1px solid #9ba0a8;background:#fff;border-radius:1px"></div><div class="a" style="left:29.6px;top:202.06px;width:3.8px;height:1px;background:#2a3f9a"></div>
<svg class="a" style="left:39.6px;top:196.16px" width="10.2" height="13" viewBox="0 0 11 13" preserveAspectRatio="none"><path d="M0.8 0.8H7L10 3.8V12.2H0.8Z" fill="#fff" stroke="#4a66bf" stroke-width="1"/><path d="M7 0.8V3.8H10" fill="#dfe6f6" stroke="#4a66bf" stroke-width="0.8"/><path d="M2 2H5.5" stroke="#26378a" stroke-width="1"/><path d="M2.6 10.5Q5 9.5 7.6 4.2" stroke="#e02020" stroke-width="1.3" fill="none"/><path d="M1.6 11.4H9.4" stroke="#26378a" stroke-width="1"/></svg>
<div class="t" style="left:54.7px;top:197.4px;max-width:95.5px;overflow:hidden;letter-spacing:-0.1px;color:#1c1c1c;font-weight:bold;color:#000;letter-spacing:-0.06px;">Nonlin fit of Experiment 1</div>
<svg class="a" style="left:53.8px;top:209.63px" width="10.2" height="13" viewBox="0 0 11 13" preserveAspectRatio="none"><path d="M0.8 0.8H7L10 3.8V12.2H0.8Z" fill="#fff" stroke="#4a66bf" stroke-width="1"/><path d="M7 0.8V3.8H10" fill="#dfe6f6" stroke="#4a66bf" stroke-width="0.8"/><path d="M2 2H5.5" stroke="#26378a" stroke-width="1"/><path d="M2.6 10.5Q5 9.5 7.6 4.2" stroke="#e02020" stroke-width="1.3" fill="none"/><path d="M1.6 11.4H9.4" stroke="#26378a" stroke-width="1"/></svg>
<div class="t" style="left:69.3px;top:210.8px;max-width:80.9px;overflow:hidden;letter-spacing:-0.1px;color:#1c1c1c;">Table of results</div>
<svg class="a" style="left:53.8px;top:223.1px" width="10.2" height="13" viewBox="0 0 11 13" preserveAspectRatio="none"><path d="M0.8 0.8H7L10 3.8V12.2H0.8Z" fill="#fff" stroke="#4a66bf" stroke-width="1"/><path d="M7 0.8V3.8H10" fill="#dfe6f6" stroke="#4a66bf" stroke-width="0.8"/><path d="M2 2H5.5" stroke="#26378a" stroke-width="1"/><path d="M2.6 10.5Q5 9.5 7.6 4.2" stroke="#e02020" stroke-width="1.3" fill="none"/><path d="M1.6 11.4H9.4" stroke="#26378a" stroke-width="1"/></svg>
<div class="t" style="left:69.3px;top:224.3px;max-width:80.9px;overflow:hidden;letter-spacing:-0.1px;color:#1c1c1c;">Curve</div>
<div class="a" style="left:20.4px;top:242.5px;width:4px;height:1px;background:#b4b6bc"></div>
<div class="a" style="left:13.6px;top:239.57000000000002px;width:6.8px;height:6.8px;border:1px solid #9ba0a8;background:#fff;border-radius:1px"></div><div class="a" style="left:15.1px;top:242.47000000000003px;width:3.8px;height:1px;background:#2a3f9a"></div>
<svg class="a" style="left:24.6px;top:238.07000000000002px" width="13" height="10" viewBox="0 0 13 10"><path d="M0.8 2.2Q0.8 0.8 2 0.8H4.6L5.8 2H10.2Q11.2 2 11.2 3V8.6H0.8Z" fill="#e9a825" stroke="#c98a12" stroke-width="0.7"/><path d="M1 9L1.6 4.2Q1.7 3.5 2.6 3.5H11.6Q12.5 3.5 12.3 4.3L11.4 9Z" fill="#ffe38a" stroke="#c98a12" stroke-width="0.7"/><path d="M2.4 4.6H11.4" stroke="#fff3c4" stroke-width="0.9"/></svg>
<div class="t" style="left:40.7px;top:237.8px;max-width:109.5px;overflow:hidden;letter-spacing:-0.1px;color:#1c1c1c;">Graphs</div>
<svg class="a" style="left:39.6px;top:250.04px" width="10.2" height="13" viewBox="0 0 11 13" preserveAspectRatio="none"><path d="M0.8 0.8H7L10 3.8V12.2H0.8Z" fill="#fff" stroke="#4a66bf" stroke-width="1"/><path d="M7 0.8V3.8H10" fill="#dfe6f6" stroke="#4a66bf" stroke-width="0.8"/><path d="M2.4 3V10.6H9" stroke="#26378a" stroke-width="0.9" fill="none"/><path d="M2.8 9.8L5 7.5L8.4 3.6" stroke="#3060e0" stroke-width="1" fill="none"/><path d="M3 10L8.5 6.5" stroke="#e04040" stroke-width="0.8"/></svg>
<div class="a" style="left:52.6px;top:250.8px;width:97.6px;height:10.6px;background:#eef0f7"></div>
<div class="t" style="left:54.7px;top:251.2px;max-width:95.5px;overflow:hidden;letter-spacing:-0.1px;color:#1c1c1c;font-weight:bold;color:#000;letter-spacing:-0.06px;">Copy of Experiment 1 graph</div>
<svg class="a" style="left:39.6px;top:263.51000000000005px" width="10.2" height="13" viewBox="0 0 11 13" preserveAspectRatio="none"><path d="M0.8 0.8H7L10 3.8V12.2H0.8Z" fill="#fff" stroke="#4a66bf" stroke-width="1"/><path d="M7 0.8V3.8H10" fill="#dfe6f6" stroke="#4a66bf" stroke-width="0.8"/><path d="M3.5 3.5V5.5M3.5 7V9.5" stroke="#e02020" stroke-width="1.6"/><path d="M6.3 4.5V7M6.3 8.5V10.5" stroke="#3060e0" stroke-width="1.6"/><path d="M1.6 11.4H9.4" stroke="#26378a" stroke-width="0.8"/></svg>
<div class="t" style="left:54.7px;top:264.7px;max-width:95.5px;overflow:hidden;letter-spacing:-0.1px;color:#1c1c1c;">Male vs. female</div>
<svg class="a" style="left:39.6px;top:276.98px" width="10.2" height="13" viewBox="0 0 11 13" preserveAspectRatio="none"><path d="M0.8 0.8H7L10 3.8V12.2H0.8Z" fill="#fff" stroke="#4a66bf" stroke-width="1"/><path d="M7 0.8V3.8H10" fill="#dfe6f6" stroke="#4a66bf" stroke-width="0.8"/><path d="M3.3 5V11" stroke="#e02020" stroke-width="1.7"/><path d="M5.6 7V11" stroke="#18a018" stroke-width="1.7"/><path d="M7.9 6V11" stroke="#e02020" stroke-width="1.5"/><path d="M1.6 11.4H9.4" stroke="#26378a" stroke-width="0.8"/></svg>
<div class="t" style="left:54.7px;top:278.2px;max-width:95.5px;overflow:hidden;letter-spacing:-0.1px;color:#1c1c1c;">Grouped data</div>
<svg class="a" style="left:24.6px;top:291.95000000000005px" width="13" height="10" viewBox="0 0 13 10"><path d="M0.8 2.2Q0.8 0.8 2 0.8H4.6L5.8 2H10.2Q11.2 2 11.2 3V8.6H0.8Z" fill="#e9a825" stroke="#c98a12" stroke-width="0.7"/><path d="M1 9L1.6 4.2Q1.7 3.5 2.6 3.5H11.6Q12.5 3.5 12.3 4.3L11.4 9Z" fill="#ffe38a" stroke="#c98a12" stroke-width="0.7"/><path d="M2.4 4.6H11.4" stroke="#fff3c4" stroke-width="0.9"/></svg>
<div class="t" style="left:40.7px;top:291.7px;max-width:109.5px;overflow:hidden;letter-spacing:-0.1px;color:#1c1c1c;">Layouts</div>
<div class="a" style="left:20.4px;top:309.8px;width:4px;height:1px;background:#b4b6bc"></div>
<div class="a" style="left:13.6px;top:306.92px;width:6.8px;height:6.8px;border:1px solid #9ba0a8;background:#fff;border-radius:1px"></div><div class="a" style="left:15.1px;top:309.82px;width:3.8px;height:1px;background:#2a3f9a"></div>
<svg class="a" style="left:24.6px;top:305.42px" width="13" height="10" viewBox="0 0 13 10"><path d="M0.8 2.2Q0.8 0.8 2 0.8H4.6L5.8 2H10.2Q11.2 2 11.2 3V8.6H0.8Z" fill="#6a2fd6" stroke="#4a1fa8" stroke-width="0.7"/><path d="M1 9L1.6 4.2Q1.7 3.5 2.6 3.5H11.6Q12.5 3.5 12.3 4.3L11.4 9Z" fill="#b99cf7" stroke="#4a1fa8" stroke-width="0.7"/><path d="M2.4 4.6H11.4" stroke="#dccfff" stroke-width="0.9"/></svg>
<div class="t" style="left:40.7px;top:305.1px;max-width:109.5px;overflow:hidden;letter-spacing:-0.1px;color:#1c1c1c;">Floating Notes</div>
<div class="a" style="left:28.1px;top:320.39000000000004px;width:6.8px;height:6.8px;border:1px solid #9ba0a8;background:#fff;border-radius:1px"></div><div class="a" style="left:29.6px;top:323.29px;width:3.8px;height:1px;background:#2a3f9a"></div><div class="a" style="left:31.0px;top:321.89000000000004px;width:1px;height:3.8px;background:#2a3f9a"></div>
<svg class="a" style="left:39.300000000000004px;top:318.89000000000004px" width="13" height="10" viewBox="0 0 13 10"><path d="M0.8 2.2Q0.8 0.8 2 0.8H4.6L5.8 2H10.2Q11.2 2 11.2 3V8.6H0.8Z" fill="#e9a825" stroke="#c98a12" stroke-width="0.7"/><path d="M1 9L1.6 4.2Q1.7 3.5 2.6 3.5H11.6Q12.5 3.5 12.3 4.3L11.4 9Z" fill="#ffe38a" stroke="#c98a12" stroke-width="0.7"/><path d="M2.4 4.6H11.4" stroke="#fff3c4" stroke-width="0.9"/></svg>
<div class="t" style="left:54.9px;top:318.6px;max-width:95.3px;overflow:hidden;letter-spacing:-0.1px;color:#1c1c1c;">Data with notes</div>
<svg class="a" style="left:157px;top:86px" width="603" height="366" viewBox="157 86 603 366" font-family="Liberation Sans, sans-serif">
<path d="M357.0 178V150.6M349.2 150.6H364.8" stroke="#0000a0" stroke-width="2.6" stroke-linecap="round" fill="none"/>
<rect x="345" y="178" width="24.0" height="150.4" fill="#0080ff"/>
<rect x="345" y="328.4" width="24.0" height="75.1" fill="#0000ff"/>
<path d="M351.2 327.09999999999997H362.8" stroke="#000" stroke-width="2.8" stroke-linecap="round"/>
<path d="M396.9 353V348.3M389.09999999999997 348.3H404.7" stroke="#0000a0" stroke-width="2.6" stroke-linecap="round" fill="none"/>
<rect x="385" y="353" width="23.8" height="50.5" fill="#0000ff"/>
<path d="M391.09999999999997 351.7H402.7" stroke="#000" stroke-width="2.8" stroke-linecap="round"/>
<path d="M460.75 326.5V314.3M452.95 314.3H468.55" stroke="#0000a0" stroke-width="2.6" stroke-linecap="round" fill="none"/>
<rect x="448.6" y="326.5" width="24.3" height="26.5" fill="#0080ff"/>
<rect x="448.6" y="353" width="24.3" height="50.5" fill="#0000ff"/>
<path d="M454.95 351.7H466.55" stroke="#000" stroke-width="2.8" stroke-linecap="round"/>
<path d="M530.0 273.1V258M522.2 258H537.8" stroke="#0000a0" stroke-width="2.6" stroke-linecap="round" fill="none"/>
<rect x="518" y="273.1" width="24.0" height="92.3" fill="#0080ff"/>
<rect x="518" y="365.4" width="24.0" height="38.1" fill="#0000ff"/>
<path d="M524.2 364.09999999999997H535.8" stroke="#000" stroke-width="2.8" stroke-linecap="round"/>
<path d="M737.3499999999999 238.6V218.6M729.55 218.6H745.1499999999999" stroke="#0000a0" stroke-width="2.6" stroke-linecap="round" fill="none"/>
<rect x="725.3" y="238.6" width="24.1" height="89.8" fill="#0080ff"/>
<rect x="725.3" y="328.4" width="24.1" height="75.1" fill="#0000ff"/>
<path d="M731.55 327.09999999999997H743.1499999999999" stroke="#000" stroke-width="2.8" stroke-linecap="round"/>
<path d="M325 102.6H334.2V405M325 153H334M325 203.1H334M325 253.2H334M325 303.3H334M325 353.4H334M325 403.5H760" stroke="#0000b4" stroke-width="3" fill="none" stroke-linejoin="miter"/>
<path d="M357.0 404V409M391.6 404V411.5M426.2 404V409M460.8 404V411.5M495.4 404V409M530.0 404V411.5M564.6 404V409M599.2 404V411.5M633.8 404V409M668.4 404V411.5M703.0 404V409M737.6 404V411.5" stroke="#0000b4" stroke-width="2.6" stroke-linecap="round" fill="none"/>
<path d="M392 145.6C393.4 149.9 397.7 163.7 400.7 171.5C403.7 179.3 406.1 184.2 410 192.5C413.9 200.8 419.0 212.0 424 221C429.0 230.0 433.9 237.7 440 246.4C446.1 255.1 456.2 267.7 460.7 273.3C465.2 278.9 462.9 275.4 466.9 279.8C470.9 284.2 478.5 293.6 484.8 299.7C491.1 305.8 497.2 311.1 504.6 316.5C512.0 321.9 521.1 327.6 529.4 332.4C537.7 337.2 546.6 341.8 554.2 345.3C561.8 348.8 567.4 350.7 575 353.3C582.6 355.9 589.9 358.3 599.6 360.8C609.3 363.3 621.6 366.2 633 368.5C644.4 370.8 656.8 372.8 668 374.3C679.2 375.9 690.1 376.9 700 377.8C709.9 378.7 721.3 379.4 727.6 379.8C733.9 380.2 736.3 380.4 738 380.5" stroke="#ff0000" stroke-width="3" fill="none" stroke-linecap="round"/>
<path d="M392 117.7V172.9M386 117.7H398M386 172.9H398" stroke="#ff0000" stroke-width="2.6" stroke-linecap="round" fill="none"/>
<circle cx="392" cy="145.6" r="6.2" fill="#ff0000"/>
<path d="M426 204.4V251.5M420 204.4H432M420 251.5H432" stroke="#ff0000" stroke-width="2.6" stroke-linecap="round" fill="none"/>
<circle cx="426" cy="228.4" r="6.2" fill="#ff0000"/>
<path d="M460.8 255.8V290.7M454.8 255.8H466.8M454.8 290.7H466.8" stroke="#ff0000" stroke-width="2.6" stroke-linecap="round" fill="none"/>
<circle cx="460.8" cy="273.3" r="6.2" fill="#ff0000"/>
<path d="M530 318.6V343.6M524 318.6H536M524 343.6H536" stroke="#ff0000" stroke-width="2.6" stroke-linecap="round" fill="none"/>
<circle cx="530" cy="331" r="6.2" fill="#ff0000"/>
<path d="M599.6 343.9V373.2M593.6 343.9H605.6M593.6 373.2H605.6" stroke="#ff0000" stroke-width="2.6" stroke-linecap="round" fill="none"/>
<circle cx="599.6" cy="358.2" r="6.2" fill="#ff0000"/>
<path d="M737.6 375.7V391.9M731.6 375.7H743.6M731.6 391.9H743.6" stroke="#ff0000" stroke-width="2.6" stroke-linecap="round" fill="none"/>
<circle cx="737.6" cy="383.8" r="6.2" fill="#ff0000"/>
<text x="304.6" y="110.5" font-size="22" fill="#ff0000" text-anchor="end">12</text>
<text x="304.6" y="160.7" font-size="22" fill="#ff0000" text-anchor="end">10</text>
<text x="304.6" y="210.8" font-size="22" fill="#ff0000" text-anchor="end">8</text>
<text x="304.6" y="260.9" font-size="22" fill="#ff0000" text-anchor="end">6</text>
<text x="304.6" y="311.1" font-size="22" fill="#ff0000" text-anchor="end">4</text>
<text x="304.6" y="361.2" font-size="22" fill="#ff0000" text-anchor="end">2</text>
<text x="304.6" y="411.4" font-size="22" fill="#ff0000" text-anchor="end">0</text>
<text x="390.8" y="443" font-size="22" fill="#0000c8" text-anchor="middle">0</text>
<text x="460.0" y="443" font-size="22" fill="#0000c8" text-anchor="middle">60</text>
<text x="529.2" y="443" font-size="22" fill="#0000c8" text-anchor="middle">120</text>
<text x="598.4" y="443" font-size="22" fill="#0000c8" text-anchor="middle">180</text>
<text x="667.6" y="443" font-size="22" fill="#0000c8" text-anchor="middle">240</text>
<text x="736.8" y="443" font-size="22" fill="#0000c8" text-anchor="middle">300</text>
<text transform="translate(230.6 411.6) rotate(-90)" font-size="21.75" font-weight="bold" fill="#ff0000">Plasma concentration (mg/mL)</text>
<text transform="translate(256.8 253.5) rotate(-90)" font-size="21.8" font-weight="bold" fill="#ff0000" text-anchor="middle" letter-spacing="1">(curve)</text>
</svg>
<div class="a" style="left:5px;top:471.6px;width:766.5px;height:2.9px;background:linear-gradient(#f4a03a,#f8b866)"></div>
<div class="a" style="left:5px;top:474.4px;width:766.5px;height:21px;background:#fcfdfe"></div>
<div class="a" style="left:2px;top:494.2px;width:775px;height:7px;background:linear-gradient(#dfe8f2,#cedbeb 25%,#cedbeb 85%,#e2eaf4)"></div>
<div class="a" style="left:0;top:500.8px;width:777px;height:4px;background:#fff;border-top:1px solid #606060"></div>
<div class="a" style="left:8.5px;top:501.8px;width:63.5px;height:3px;background:#000"></div>
<div class="a" style="left:101.7px;top:501.8px;width:63px;height:3px;background:#a0a0a0"></div>
<div class="a" style="left:193.5px;top:501.8px;width:65px;height:3px;background:#808080"></div>
<div class="a" style="left:287px;top:501.8px;width:63px;height:3px;background:#d8d8d8;border:1px solid #999"></div>
<div class="a" style="left:41.2px;top:477px;width:1px;height:14.5px;background:#c3c7ce"></div>
<div class="a" style="left:116.5px;top:477px;width:1px;height:14.5px;background:#c3c7ce"></div>
<div class="a" style="left:169.3px;top:477px;width:1px;height:14.5px;background:#c3c7ce"></div>
<div class="a" style="left:737.3px;top:477px;width:1px;height:14.5px;background:#c3c7ce"></div>
<div class="a" style="left:284px;top:475.3px;width:243.6px;height:16.2px;background:#fff;border:1px solid #eceff4;border-right:1px solid #cfd3da;border-left:1px solid #dde1e8"></div>
<div class="a" style="left:529px;top:475.3px;width:127.2px;height:16.2px;background:#fff;border:1px solid #f2f4f8;border-right:1.3px solid #bfc3ca"></div>
<div class="t" style="left:290px;top:478.5px;font-size:9.6px;color:#222;letter-spacing:-0.3px">Copy of Experiment 1 graph</div>
<svg class="a" style="left:516.5px;top:482.5px" width="6" height="4" viewBox="0 0 6 4"><path d="M0 0.3H6L3 3.8Z" fill="#222"/></svg>
<svg class="a" style="left:9.4px;top:478.4px" width="11" height="11" viewBox="0 0 11 11" ><rect x="0.4" y="0.4" width="10.2" height="10.2" fill="#fff" stroke="#8aa0d0" stroke-width="0.6"/><rect x="0.4" y="0.4" width="10.2" height="2" fill="#3a78e0"/><rect x="0.6" y="2.6" width="2.8" height="7.8" fill="#e4e8f0"/><rect x="1" y="3.4" width="2" height="1.6" fill="#f0c040"/><rect x="1" y="6" width="2" height="1.4" fill="#b0b8c8"/><rect x="1" y="8.2" width="2" height="1.4" fill="#f0c040"/><path d="M4.2 6.4L7.4 3.6V5.2H9.8V7.6H7.4V9.2Z" fill="#1c5ee0" stroke="#0c3aa8" stroke-width="0.4"/></svg>
<svg class="a" style="left:5px;top:473px" width="21" height="23" viewBox="0 0 21 23" ><ellipse cx="10.2" cy="11.5" rx="7.6" ry="9.1" fill="none" stroke="#f00000" stroke-width="1.5"/></svg>
<svg class="a" style="left:24.8px;top:478.4px" width="12.2" height="11.6" viewBox="0 0 12.2 11.6" ><rect x="0.3" y="0.3" width="11.6" height="11" fill="#2e64cc"/><rect x="0.3" y="0.3" width="11.6" height="1.6" fill="#4a86e8"/><g fill="#fff"><rect x="1.8" y="3" width="3.4" height="2.8"/><rect x="6.8" y="3" width="3.4" height="2.8"/><rect x="1.8" y="7.4" width="3.4" height="2.8"/><rect x="6.8" y="7.4" width="3.4" height="2.8"/></g><g fill="#2e64cc"><rect x="3.1" y="3" width="0.8" height="2.8"/><rect x="8.1" y="3" width="0.8" height="2.8"/><rect x="1.8" y="4" width="3.4" height="0.8"/><rect x="6.8" y="4" width="3.4" height="0.8"/></g></svg>
<svg class="a" style="left:122.4px;top:478.8px" width="9.4" height="11.4" viewBox="0 0 9.4 11.4" ><path d="M0.6 5.7L8.6 0.5V10.9Z" fill="#2fb02f" stroke="#157015" stroke-width="0.6"/><path d="M2.6 5.6L7.6 2.4V5.6Z" fill="#6fd86f" opacity="0.6"/></svg>
<svg class="a" style="left:139.8px;top:478.8px" width="9.4" height="11.4" viewBox="0 0 9.4 11.4" ><path d="M8.8 5.7L0.8 0.5V10.9Z" fill="#2fb02f" stroke="#157015" stroke-width="0.6"/><path d="M6.8 5.6L1.8 2.4V5.6Z" fill="#6fd86f" opacity="0.6"/></svg>
<svg class="a" style="left:152.6px;top:477.6px" width="13" height="13" viewBox="0 0 13 13" ><path d="M7.6 7.8L11.4 11.6" stroke="#f0e8c0" stroke-width="1.8" stroke-linecap="round"/><circle cx="5.2" cy="5.2" r="4.4" fill="#c6dfc6" stroke="#d8e8d8" stroke-width="0.8"/><circle cx="7.4" cy="2.6" r="1.6" fill="#fff"/></svg>
<svg class="a" style="left:173.6px;top:478.2px" width="13" height="12.8" viewBox="0 0 13 12.8" ><g fill="none" stroke="#3a4258" stroke-width="1.3"><rect x="-2.6" y="-1.9" width="5.8" height="3.8" rx="1.9" transform="translate(9.2 3.6) rotate(-42)"/><rect x="-2.6" y="-1.9" width="5.8" height="3.8" rx="1.9" transform="translate(3.8 9) rotate(-42)"/></g><path d="M4.6 8.2L8.6 4.4" stroke="#6a7288" stroke-width="1.6" stroke-linecap="round"/></svg>
<svg class="a" style="left:186.8px;top:484.2px" width="4.4" height="2.8" viewBox="0 0 4.4 2.8" ><path d="M0.1 0.2H4.3L2.2 2.6Z" fill="#1a1a1a"/></svg>
<div class="a" style="left:195px;top:474.3px;width:16.6px;height:16.7px;background:linear-gradient(#f6f8fb,#e9edf4);border:1px solid #b4b8c0;border-top:none;border-radius:0 0 3px 3px"></div>
<div class="a" style="left:212px;top:474.3px;width:17.2px;height:16.7px;background:linear-gradient(#f6f8fb,#e9edf4);border:1px solid #b4b8c0;border-top:none;border-radius:0 0 3px 3px"></div>
<div class="a" style="left:229.6px;top:474.3px;width:17.0px;height:16.7px;background:linear-gradient(#f6f8fb,#e9edf4);border:1px solid #b4b8c0;border-top:none;border-radius:0 0 3px 3px"></div>
<div class="a" style="left:247px;top:474.3px;width:16.4px;height:16.7px;background:linear-gradient(#f9c877,#fbdc9c);border-radius:0 0 3px 3px"></div>
<div class="a" style="left:264px;top:474.3px;width:16.6px;height:16.7px;background:linear-gradient(#f6f8fb,#e9edf4);border:1px solid #b4b8c0;border-top:none;border-radius:0 0 3px 3px"></div>
<svg class="a" style="left:198.4px;top:476.6px" width="10.2" height="13" viewBox="0 0 11 13" preserveAspectRatio="none"><path d="M0.8 0.8H7L10 3.8V12.2H0.8Z" fill="#fff" stroke="#4a66bf" stroke-width="1"/><path d="M7 0.8V3.8H10" fill="#dfe6f6" stroke="#4a66bf" stroke-width="0.8"/><path d="M2.7 4.5V11M4.6 4.5V11M6.5 4.5V11M8.3 5V11" stroke="#5a6070" stroke-width="1.1"/><path d="M1.6 11.4H9.4" stroke="#26378a" stroke-width="1"/></svg>
<svg class="a" style="left:215px;top:477px" width="11.4" height="11.4" viewBox="0 0 11.4 11.4" ><circle cx="5.7" cy="5.7" r="5.3" fill="#2456c8" stroke="#163a9a" stroke-width="0.6"/><circle cx="5.7" cy="3" r="1" fill="#fff"/><path d="M4.4 4.9H6.4V8.6M4.2 8.8H7.4" stroke="#fff" stroke-width="1.3" fill="none"/></svg>
<svg class="a" style="left:232.6px;top:478.6px" width="10.8" height="7.8" viewBox="0 0 10.8 7.8" ><rect x="0.3" y="0.3" width="10.2" height="2.7" rx="0.6" fill="#f6b820" stroke="#d89008" stroke-width="0.5"/><rect x="0.3" y="4.6" width="10.2" height="2.7" rx="0.6" fill="#f6b820" stroke="#d89008" stroke-width="0.5"/></svg>
<svg class="a" style="left:250.4px;top:476.6px" width="10.2" height="13" viewBox="0 0 11 13" preserveAspectRatio="none"><path d="M0.8 0.8H7L10 3.8V12.2H0.8Z" fill="#fff" stroke="#4a66bf" stroke-width="1"/><path d="M7 0.8V3.8H10" fill="#dfe6f6" stroke="#4a66bf" stroke-width="0.8"/><path d="M2.4 3V10.6H9" stroke="#26378a" stroke-width="0.9" fill="none"/><path d="M2.8 9.8L5 7.5L8.4 3.6" stroke="#3060e0" stroke-width="1" fill="none"/><path d="M3 10L8.5 6.5" stroke="#e04040" stroke-width="0.8"/></svg>
<svg class="a" style="left:267.6px;top:476.6px" width="10.2" height="13" viewBox="0 0 11 13" preserveAspectRatio="none"><path d="M0.8 0.8H7L10 3.8V12.2H0.8Z" fill="#fff" stroke="#4a66bf" stroke-width="1"/><path d="M7 0.8V3.8H10" fill="#dfe6f6" stroke="#4a66bf" stroke-width="0.8"/><path d="M3 3.4H7.4" stroke="#e02020" stroke-width="1.2"/><rect x="2.6" y="5.6" width="2.4" height="4.6" fill="#e02020"/><rect x="5.6" y="7" width="2.6" height="3.2" fill="#18a018"/><path d="M1.6 11.4H9.4" stroke="#26378a" stroke-width="0.8"/></svg>
<svg class="a" style="left:742.6px;top:479px" width="11.4" height="11.6" viewBox="0 0 11.4 11.6" ><path d="M6.2 6.4L10.2 10.4" stroke="#e8a030" stroke-width="1.8" stroke-linecap="round"/><circle cx="4.2" cy="4.2" r="3.5" fill="#eaf1fc" stroke="#5a7ec8" stroke-width="1"/><path d="M2.4 4.2H6" stroke="#1c48b0" stroke-width="1.1"/><path d="M4.2 2.4V6" stroke="#1c48b0" stroke-width="1.1"/></svg>
<svg class="a" style="left:758.6px;top:479px" width="11.4" height="11.6" viewBox="0 0 11.4 11.6" ><path d="M6.2 6.4L10.2 10.4" stroke="#e8a030" stroke-width="1.8" stroke-linecap="round"/><circle cx="4.2" cy="4.2" r="3.5" fill="#eaf1fc" stroke="#5a7ec8" stroke-width="1"/><path d="M2.4 4.2H6" stroke="#1c48b0" stroke-width="1.1"/></svg>
<svg class="a" style="left:763.4px;top:490.6px" width="8" height="5" viewBox="0 0 8 5" ><path d="M0.6 4.4L3.2 1.2M3 4.4L5.6 1.2M5.4 4.4L8 1.2" stroke="#9aa2b0" stroke-width="0.8"/></svg>
<svg class="a" style="left:8px;top:3.8px" width="11.4" height="11.4" viewBox="0 0 11.4 11.4" ><g transform="scale(0.95)"><path d="M0.6 1.6L7.6 0.6L5 2.4Z" fill="#9fd8f4"/><path d="M0.6 1.6L5 2.4V9L1 7.6Z" fill="url(#gRain)"/><path d="M5 2.4L7.6 0.6V7.4L5 9Z" fill="url(#gPurp)"/><path d="M1 7.6L5 9L7.2 7.6L4.4 11.4Z" fill="#eaf2ff" stroke="#7aa6e4" stroke-width="0.5"/><path d="M5.2 5.2L11 4.4V10.2Z" fill="url(#gBeam)"/></g></svg>
<svg class="a" style="left:10.8px;top:19px" width="8.6" height="8.6" viewBox="0 0 8.6 8.6" ><g transform="scale(0.72)"><path d="M0.6 1.6L7.6 0.6L5 2.4Z" fill="#9fd8f4"/><path d="M0.6 1.6L5 2.4V9L1 7.6Z" fill="url(#gRain)"/><path d="M5 2.4L7.6 0.6V7.4L5 9Z" fill="url(#gPurp)"/><path d="M1 7.6L5 9L7.2 7.6L4.4 11.4Z" fill="#eaf2ff" stroke="#7aa6e4" stroke-width="0.5"/><path d="M5.2 5.2L11 4.4V10.2Z" fill="url(#gBeam)"/></g></svg>
<svg class="a" style="left:14.6px;top:23.4px" width="9" height="8.6" viewBox="0 0 9 8.6" ><path d="M0.6 0.6H5.6L8 3V8H0.6Z" fill="#f7f9fd" stroke="#7d8798" stroke-width="0.8"/><path d="M2 6.6L4 4.6L5 5.6L6.8 3.6" stroke="#8a94a8" stroke-width="0.7" fill="none"/></svg>
</body></html>
